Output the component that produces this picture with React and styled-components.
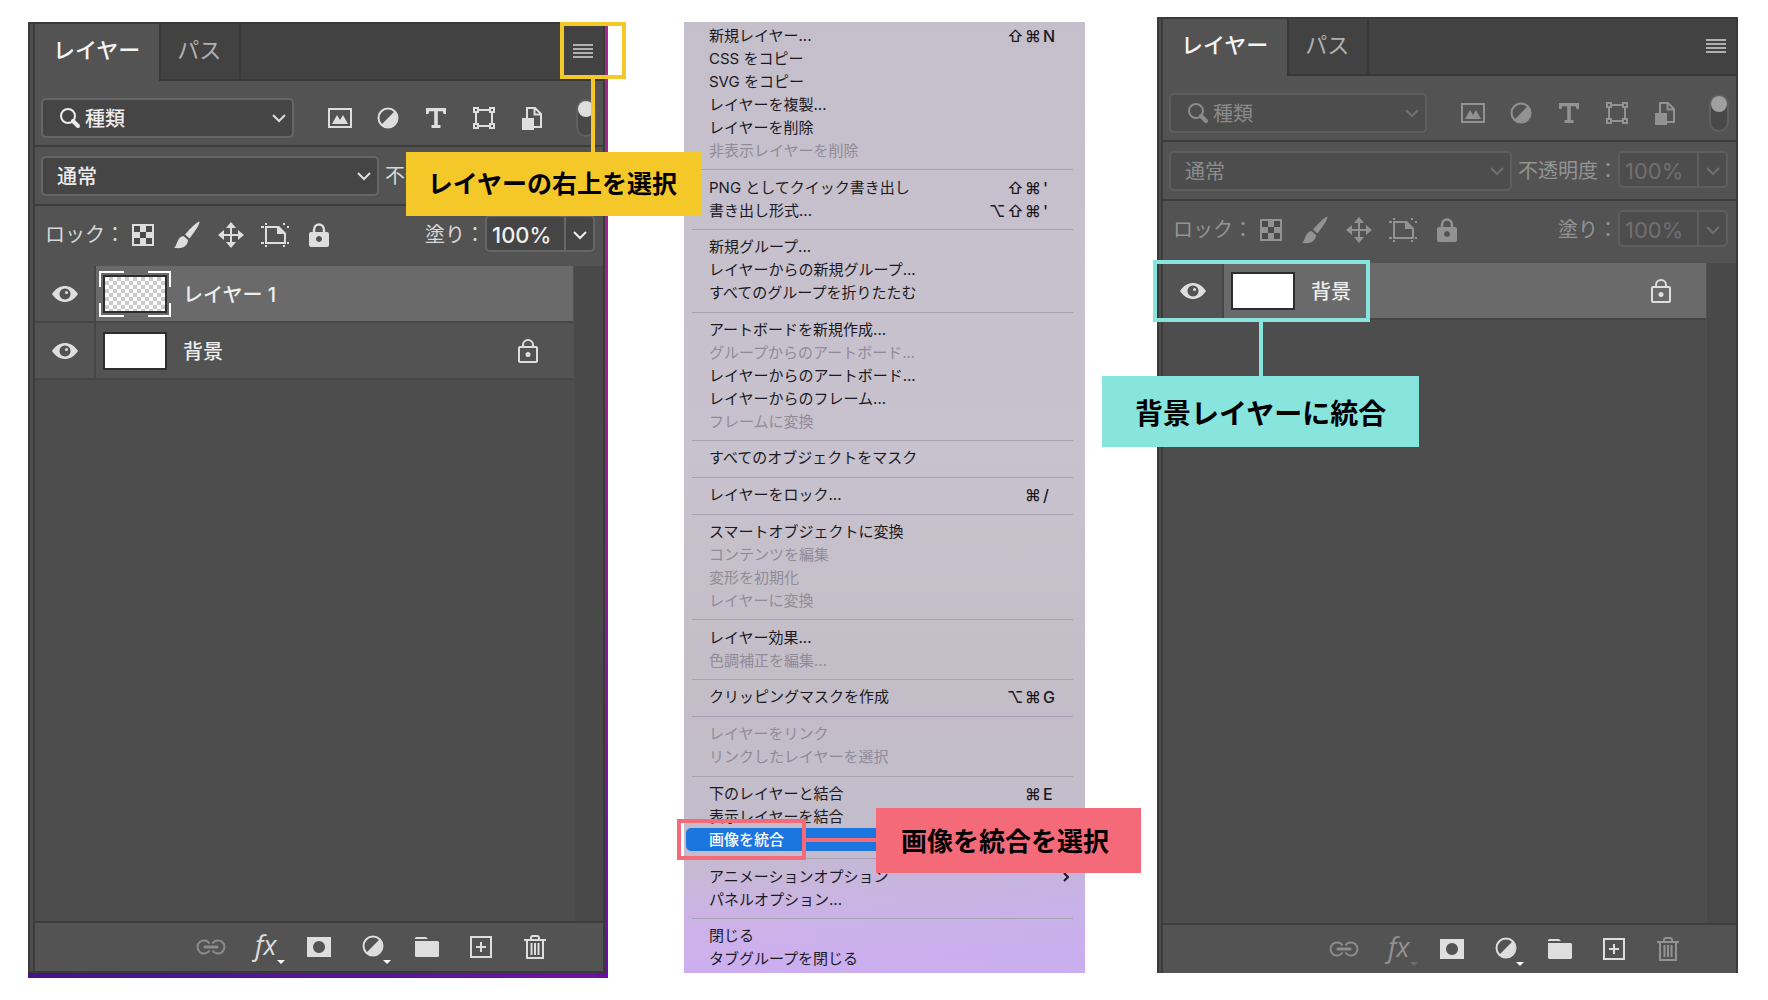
import React, { useState } from 'react'
import styled, { createGlobalStyle } from 'styled-components'

const GlobalStyle = createGlobalStyle`
    * {
        box-sizing: border-box;
    }
    body {
        margin: 0;
        background-color: white;
        font-family: Inter, "Noto Sans CJK JP", sans-serif;
    }
    button, input, select {
        font-family: inherit;
        margin: 0;
    }
`;

const Page = styled.main`
    display: flex;
    gap: 72px;
    min-height: 100vh;
    padding: 0 30px 0 28px;
`;

/* ---------- panel ---------- */

const PanelFrame = styled.section`
    position: relative;
    display: flex;
    flex: ${(props) => (props.$purple ? "577" : "581")} 1 0;
    min-width: 0;
    margin: ${(props) => (props.$purple ? "22px 4px 22px 0" : "17px 0 27px")};
    padding: ${(props) => (props.$purple ? "0 3px 5px 0" : "0")};
    background: ${(props) => props.$purple
        ? "linear-gradient(to right, #43158a, #6a14a0 98%, transparent 98%) bottom / 100% 6px no-repeat, linear-gradient(#a8268f, #9a1f90 40%, #6512a0)"
        : "#535353"};
`;
const Panel = styled.div`
    display: flex;
    flex-direction: column;
    flex: 1;
    min-width: 0;
    background-color: #4d4d4d;
    border: solid #3a3a3a;
    border-width: 2px 2px ${(props) => (props.$disabled ? "0" : "2px")} 2px;
`;
const Inner = styled.div`
    display: flex;
    flex-direction: column;
    flex: 1;
    border-left: 2px solid #3c3c3c;
    margin-left: ${(props) => (props.$disabled ? "2px" : "3px")};
`;
const TabBar = styled.div`
    display: flex;
    height: 57px;
    background-color: #424242;
`;
const Tab = styled.button`
    border: solid #383838;
    border-width: ${(props) => (props.$active ? "0 2px 0 0" : "0 2px 2px 0")};
    background-color: ${(props) => (props.$active ? "#535353" : "#424242")};
    color: ${(props) => (props.$active ? "#f4f4f4" : "#b0b0b0")};
    font-size: 22px;
    font-weight: ${(props) => (props.$active ? 500 : 400)};
    padding: ${(props) => (props.$active ? "0 19px 9px 18px" : "0 18px 7px 16px")};
    white-space: nowrap;
`;
const TabActions = styled.div`
    flex: 1;
    display: flex;
    justify-content: flex-end;
    align-items: center;
    padding-right: 10px;
    border-bottom: 2px solid #383838;
`;
const IconButton = styled.button`
    display: flex;
    align-items: center;
    justify-content: center;
    width: ${(props) => props.$width || 28}px;
    height: 28px;
    padding: 0;
    border: none;
    background: none;
    color: ${(props) => (props.$dim ? "#929292" : "#dedede")};

    svg {
        flex: none;
        overflow: visible;
    }
`;
const Row = styled.div`
    display: flex;
    align-items: flex-start;
    background-color: #535353;
    padding: ${(props) => props.$pad};
    border-bottom: ${(props) => (props.$last ? "0" : "2px")} solid #3d3d3d;
`;
const SelectBox = styled.div`
    flex: 1;
    min-width: 0;
    height: 40px;
    display: flex;
    align-items: center;
    gap: 4px;
    padding: 0 5px 0 ${(props) => (props.$search ? "16px" : "14px")};
    border: 2px solid ${(props) => (props.$disabled ? "#5e5e5e" : "#666666")};
    border-radius: 5px;
    background-color: ${(props) => (props.$disabled ? "#4d4d4d" : "#454545")};
    color: ${(props) => (props.$disabled ? "#8c8c8c" : "#ececec")};

    svg {
        flex: none;
    }
    svg:last-child {
        color: ${(props) => (props.$disabled ? "#707070" : "#dedede")};
    }
`;
const Select = styled.select`
    flex: 1;
    min-width: 0;
    height: 36px;
    padding: 1px 0 0;
    appearance: none;
    border: none;
    background: none;
    color: inherit;
    font-size: 20px;
    font-weight: ${(props) => (props.disabled ? 400 : 500)};
    opacity: 1;
`;
const FilterIcons = styled.div`
    display: flex;
    align-items: center;
    gap: 20px;
    height: 40px;
    margin: 0 30px 0 32px;
`;
const FilterSwitch = styled.input`
    appearance: none;
    width: 20px;
    height: 38px;
    margin: 0;
    margin-top: 1px;
    padding: 0;
    border: 2px solid #5f5f5f;
    border-radius: 10px;
    background-color: #484848;

    &::before {
        content: "";
        display: block;
        width: 16px;
        height: 16px;
        border-radius: 50%;
        background-color: ${(props) => (props.$dim ? "#a0a0a0" : "#dedede")};
    }
`;
const RowLabel = styled.label`
    height: 40px;
    line-height: 41px;
    font-size: 20px;
    white-space: nowrap;
    color: ${(props) => (props.$disabled ? "#939393" : "#d8d8d8")};
    margin-left: ${(props) => props.$gap || "0"};
`;
const LockIcons = styled.div`
    display: flex;
    align-items: center;
    gap: 16px;
    height: 40px;
    margin-left: 4px;
`;
const NumberBox = styled.div`
    display: flex;
    width: 110px;
    height: 37px;
    border: 2px solid ${(props) => (props.$disabled ? "#5e5e5e" : "#666666")};
    border-radius: 5px;
    background-color: ${(props) => (props.$disabled ? "#4d4d4d" : "#454545")};
    color: ${(props) => (props.$disabled ? "#707070" : "#f0f0f0")};
`;
const NumberInput = styled.input`
    width: 79px;
    padding: 2px 0 0 5px;
    border: none;
    border-right: 2px solid ${(props) => (props.disabled ? "#5e5e5e" : "#666666")};
    background: none;
    color: inherit;
    font-size: 22px;
    font-weight: ${(props) => (props.disabled ? 400 : 500)};
`;
const NumberArrow = styled.button`
    flex: 1;
    display: flex;
    align-items: center;
    justify-content: center;
    padding: 3px 0 0;
    border: none;
    background: none;
    color: inherit;
`;

/* ---------- layers ---------- */

const LayerArea = styled.div`
    flex: 1;
    display: flex;
`;
const LayerList = styled.ul`
    flex: 1;
    list-style: none;
    margin: 0;
    padding: 0;
`;
const ScrollTrack = styled.div`
    width: 30px;
    background-color: #494949;
    border-left: 1px solid #505050;
`;
const Layer = styled.li`
    display: flex;
    height: 57px;
    background-color: #535353;
    border-bottom: 2px solid #454545;
`;
const EyeButton = styled.button`
    display: flex;
    align-items: center;
    justify-content: center;
    width: 61px;
    padding: 0;
    border: none;
    border-right: 2px solid #454545;
    background: none;
    color: #dedede;
`;
const LayerBody = styled.div`
    flex: 1;
    display: flex;
    align-items: center;
    gap: 12px;
    padding: 0 35px 0 3px;
    color: #dedede;
    background-color: ${(props) => (props.$selected ? "#6a6a6a" : "transparent")};
`;
const LayerName = styled.span`
    flex: 1;
    font-size: 20px;
    font-weight: 500;
    color: #ededed;
`;
const Footer = styled.div`
    display: flex;
    align-items: center;
    justify-content: flex-end;
    gap: 26px;
    height: 50px;
    padding: 0 54px 1px 0;
    background-color: #535353;
    border-top: 2px solid #3d3d3d;
`;

/* ---------- menu ---------- */

const Menu = styled.ul`
    flex: 401 1 0;
    display: flex;
    flex-direction: column;
    list-style: none;
    margin: 22px 0 27px;
    padding: 3px 0 2px;
    background: linear-gradient(to right, transparent, #c3aef066) bottom / 100% 120px no-repeat,
        linear-gradient(#c5bfcb, #c8c2ce 45%, #c3bdc8 70%, #c4bccb 87%, #ccb3e6 94%, #ceaef0);
`;
const MenuItem = styled.li`
    position: relative;
    flex: 1 0 22px;
    display: flex;
    margin: 0 4px 0 2px;
`;
const MenuButton = styled.button`
    flex: 1;
    display: flex;
    align-items: center;
    justify-content: space-between;
    padding: 0 ${(props) => (props.$sub ? "12px" : "22px")} 0 23px;
    border: none;
    border-radius: 5px;
    background-color: ${(props) => (props.$active ? "#1b76e0" : "transparent")};
    color: ${(props) => (props.$active ? "white" : "#1b191e")};
    font-size: 15px;
    font-weight: ${(props) => (props.$active ? 500 : 400)};
    line-height: 22px;
    white-space: nowrap;

    &:disabled {
        color: #918b98;
    }
`;
const Separator = styled.li`
    flex: none;
    height: 14px;
    margin: 0 12px 0 8px;
    padding-top: 7px;

    &::after {
        content: "";
        display: block;
        height: 1px;
        background-color: #a8a1b2;
    }
`;
const Shortcut = styled.span`
    display: flex;
`;
const Key = styled.kbd`
    width: ${(props) => (props.$last ? 16 : 18)}px;
    text-align: left;
    font-family: Inter, "DejaVu Sans", sans-serif;
    font-size: 16px;
    font-weight: 500;
`;

/* ---------- callouts ---------- */

const Marker = styled.div`
    position: absolute;
    z-index: 2;
    pointer-events: none;
    border: 4px solid ${(props) => props.$color};
`;
const Connector = styled.div`
    position: absolute;
    z-index: 2;
    background-color: ${(props) => props.$color};
`;
const CalloutLabel = styled.p`
    position: absolute;
    z-index: 2;
    display: flex;
    align-items: center;
    justify-content: center;
    margin: 0;
    font-weight: 700;
    color: black;
    white-space: nowrap;
    background-color: ${(props) => props.$color};
`;

const YELLOW = "#f4c829";
const PINK = "#f56a79";
const TEAL = "#88e5de";

const YellowMarker = styled(Marker)`
    top: 0;
    right: -18px;
    width: 66px;
    height: 57px;
`;
const YellowConnector = styled(Connector)`
    top: 57px;
    right: 13px;
    width: 4px;
    height: 73px;
`;
const YellowLabel = styled(CalloutLabel)`
    top: 130px;
    right: -93px;
    height: 64px;
    padding: 0 24px 4px 22px;
    font-size: 25px;
`;
const PinkMarker = styled(Marker)`
    top: -9px;
    bottom: -9px;
    left: -9px;
    width: 129px;
`;
const PinkConnector = styled(Connector)`
    top: 10px;
    left: 120px;
    width: 70px;
    height: 4px;
`;
const PinkLabel = styled(CalloutLabel)`
    top: -20px;
    left: 190px;
    height: 65px;
    padding: 0 32px 3px 25px;
    font-size: 26px;
`;
const TealMarker = styled(Marker)`
    top: 243px;
    left: -4px;
    width: 217px;
    height: 62px;
`;
const TealConnector = styled(Connector)`
    top: 305px;
    left: 102px;
    width: 4px;
    height: 55px;
`;
const TealLabel = styled(CalloutLabel)`
    top: 359px;
    left: -55px;
    height: 71px;
    padding: 0 33px;
    font-size: 28px;
`;

/* ---------- icons ---------- */

const Chevron = () => (
    <svg width="16" height="16" viewBox="0 0 16 16" fill="none" stroke="currentColor" strokeWidth="2">
        <path d="M2 5 L8 11 L14 5" />
    </svg>
);
const Hamburger = () => (
    <svg width="20" height="15" viewBox="0 0 20 15" fill="#b0b0b0">
        <path d="M0 0h20v2H0z M0 4h20v2H0z M0 8h20v2H0z M0 12h20v2H0z" />
    </svg>
);
const SearchIcon = () => (
    <svg width="22" height="22" viewBox="0 0 22 22" fill="none" stroke="currentColor">
        <circle cx="9" cy="9" r="7" strokeWidth="2" />
        <path d="M14 14 L19 19" strokeWidth="4" strokeLinecap="round" />
    </svg>
);
const ImageIcon = () => (
    <svg width="24" height="20" viewBox="0 0 24 20" fill="currentColor">
        <path d="M0 0h24v20H0z M2 2v16h20V2z" fillRule="evenodd" />
        <path d="M4 16 L9 7 L12 12 L15 7 L20 16z" />
    </svg>
);
const AdjustIcon = () => (
    <svg width="22" height="22" viewBox="0 0 22 22">
        <circle cx="11" cy="11" r="9.5" fill="none" stroke="currentColor" strokeWidth="2" />
        <path d="M4.3 17.7 A9.5 9.5 0 0 0 17.7 4.3z" fill="currentColor" />
    </svg>
);
const TypeIcon = () => (
    <svg width="20" height="20" viewBox="0 0 20 20" fill="currentColor">
        <path d="M0 0h20v6h-2.5l-.7-2.8H11.8V17H14.5v3h-9v-3H8.2V3.2H3.2L2.5 6H0z" />
    </svg>
);
const ShapeIcon = () => (
    <svg width="22" height="22" viewBox="0 0 22 22" fill="none" stroke="currentColor" strokeWidth="2">
        <path d="M1 1h4v4H1z M17 1h4v4h-4z M1 17h4v4H1z M17 17h4v4h-4z M5 3h12 M5 19h12 M3 5v12 M19 5v12" />
    </svg>
);
const SmartIcon = () => (
    <svg width="20" height="24" viewBox="0 0 20 24">
        <path d="M5 12V2h8l6 6v13h-8 M12.5 2v6.5H19" fill="none" stroke="currentColor" strokeWidth="2" />
        <path d="M0 12h12v12H0z" fill="currentColor" />
    </svg>
);
const CheckerIcon = () => (
    <svg width="22" height="22" viewBox="0 0 22 22">
        <path d="M0 0h22v22H0z" fill="currentColor" />
        <path d="M2 2h6v6H2z M14 2h6v6h-6z M8 8h6v6H8z M2 14h6v6H2z M14 14h6v6h-6z" fill="#4a4a4a" />
    </svg>
);
const BrushIcon = () => (
    <svg width="26" height="28" viewBox="0 0 26 28" fill="currentColor">
        <path d="M25.5 .5 C26 2 23 8 15.5 17.5 L11 13.5 C17 6.5 23 1 25.5 .5z" />
        <path d="M9.5 15 L14 19 C14 25 8 28.5 0 26.8 C3.5 25 2.5 16 9.5 15z" />
    </svg>
);
const MoveIcon = () => (
    <svg width="26" height="26" viewBox="0 0 26 26" fill="currentColor">
        <path d="M12 5h2v16h-2z M5 12h16v2H5z" />
        <path d="M13 0l5 6H8z M13 26l5-6H8z M0 13l6-5v10z M26 13l-6-5v10z" />
    </svg>
);
const ArtboardIcon = () => (
    <svg width="28" height="24" viewBox="0 0 28 24" fill="currentColor">
        <path d="M4 3h14l7 7v11H4z M6 5v14h17v-8h-7V5z" fillRule="evenodd" />
        <path d="M4 0h2v2H4z M0 3h3v2H0z M22 0h2v2h-2z M26 3h2v2h-2z M0 19h3v2H0z M4 22h2v2H4z M22 22h2v2h-2z M26 19h2v2h-2z" />
    </svg>
);
const LockFilled = () => (
    <svg width="20" height="24" viewBox="0 0 20 24">
        <path d="M5 11V7a5 5.5 0 0 1 10 0v4" fill="none" stroke="currentColor" strokeWidth="2.5" />
        <path d="M2 9h16a2 2 0 0 1 2 2v11a2 2 0 0 1-2 2H2a2 2 0 0 1-2-2V11a2 2 0 0 1 2-2z M10 13a3 3 0 1 0 .01 0z" fill="currentColor" fillRule="evenodd" />
    </svg>
);
const LockOutline = () => (
    <svg width="20" height="24" viewBox="0 0 20 24" fill="none" stroke="currentColor" strokeWidth="2">
        <path d="M5 8V6a5 5 0 0 1 10 0v2" />
        <rect x="1" y="8" width="18" height="15" rx="1" />
        <circle cx="10" cy="15.5" r="2.5" fill="currentColor" stroke="none" />
    </svg>
);
const EyeIcon = () => (
    <svg width="26" height="16" viewBox="0 0 26 16">
        <path d="M0 8 C7 -2.7 19 -2.7 26 8 C19 18.7 7 18.7 0 8z M13 2.5a5.5 5.5 0 1 0 .01 0z" fill="currentColor" fillRule="evenodd" />
        <circle cx="14.5" cy="6.5" r="1.5" fill="currentColor" />
    </svg>
);
const LinkIcon = () => (
    <svg width="28" height="16" viewBox="0 0 28 16" fill="none" stroke="#8c8c8c" strokeWidth="2">
        <path d="M12.5 4.5 A6.5 6.5 0 1 0 12.5 11.5" />
        <path d="M15.5 4.5 A6.5 6.5 0 1 1 15.5 11.5" />
        <path d="M8 8h12" strokeWidth="3" strokeLinecap="round" />
    </svg>
);
const FxIcon = ({ arrow }) => (
    <svg width="28" height="28" viewBox="0 0 28 28" fill="currentColor">
        <text x="4" y="22" fontFamily="'Open Sans', 'Noto Sans', sans-serif" fontStyle="italic" fontSize="27">fx</text>
        <path d="M26 27h8l-4 4z" fill={arrow} />
    </svg>
);
const MaskIcon = () => (
    <svg width="26" height="20" viewBox="0 0 26 20" fill="currentColor">
        <path d="M1 0h24v20H1z M13 4a6 6 0 1 0 .01 0z" fillRule="evenodd" />
    </svg>
);
const AdjustMenuIcon = () => (
    <svg width="22" height="22" viewBox="0 0 22 22">
        <circle cx="11" cy="10" r="9.5" fill="none" stroke="currentColor" strokeWidth="2" />
        <path d="M4.3 16.7 A9.5 9.5 0 0 0 17.7 3.3z" fill="currentColor" />
        <path d="M21 24h8l-4 4z" fill="white" />
    </svg>
);
const FolderIcon = () => (
    <svg width="24" height="20" viewBox="0 0 24 20" fill="currentColor">
        <path d="M1 0h10l2 2H0V1z M0 4h23l1 1v14l-1 1H1l-1-1z" />
    </svg>
);
const NewIcon = () => (
    <svg width="22" height="22" viewBox="0 0 22 22" fill="none" stroke="currentColor" strokeWidth="2">
        <path d="M1 1h20v20H1z M11 6v10 M6 11h10" />
    </svg>
);
const TrashIcon = () => (
    <svg width="22" height="24" viewBox="0 0 22 24" fill="none" stroke="currentColor" strokeWidth="2">
        <path d="M0 5h22 M7 4V3a2 2 0 0 1 2-2h4a2 2 0 0 1 2 2v1 M3 5v18h16V5 M7.5 8v12 M11 8v12 M14.5 8v12" />
    </svg>
);
const SubmenuArrow = () => (
    <svg width="6" height="10" viewBox="0 0 6 10" fill="none" stroke="currentColor" strokeWidth="2">
        <path d="M1 1l4 4-4 4" />
    </svg>
);

const Thumbnail = ({ transparent }) => (
    <svg width="72" height="46" viewBox="0 0 72 46">
        <defs>
            <pattern id="checker" x="6" y="6" width="8" height="8" patternUnits="userSpaceOnUse">
                <path d="M0 0h8v8H0z" fill="white" />
                <path d="M4 0h4v4H4z M0 4h4v4H0z" fill="#cbcbcb" />
            </pattern>
        </defs>
        <rect x="5" y="5" width="62" height="36" fill={transparent ? "url(#checker)" : "white"} stroke="#2d2d2d" strokeWidth="2" />
        {transparent && (
            <path
                d="M1 16V1h24 M49 1h22v15 M1 32v13h24 M49 45h22V32"
                fill="none"
                stroke="white"
                strokeWidth="2"
            />
        )}
    </svg>
);

/* ---------- data ---------- */

const filters = [
    ["ピクセルレイヤー", ImageIcon],
    ["調整レイヤー", AdjustIcon],
    ["テキストレイヤー", TypeIcon],
    ["シェイプレイヤー", ShapeIcon],
    ["スマートオブジェクト", SmartIcon],
];
const locks = [
    ["透明ピクセル", CheckerIcon],
    ["画像ピクセル", BrushIcon],
    ["位置", MoveIcon],
    ["アートボード", ArtboardIcon],
    ["すべて", LockFilled],
];

const menuGroups = [
    [
        { text: "新規レイヤー...", keys: "⇧⌘N" },
        { text: "CSS をコピー" },
        { text: "SVG をコピー" },
        { text: "レイヤーを複製..." },
        { text: "レイヤーを削除" },
        { text: "非表示レイヤーを削除", disabled: true },
    ],
    [
        { text: "PNG としてクイック書き出し", keys: "⇧⌘'" },
        { text: "書き出し形式...", keys: "⌥⇧⌘'" },
    ],
    [
        { text: "新規グループ..." },
        { text: "レイヤーからの新規グループ..." },
        { text: "すべてのグループを折りたたむ" },
    ],
    [
        { text: "アートボードを新規作成..." },
        { text: "グループからのアートボード...", disabled: true },
        { text: "レイヤーからのアートボード..." },
        { text: "レイヤーからのフレーム..." },
        { text: "フレームに変換", disabled: true },
    ],
    [{ text: "すべてのオブジェクトをマスク" }],
    [{ text: "レイヤーをロック...", keys: "⌘/" }],
    [
        { text: "スマートオブジェクトに変換" },
        { text: "コンテンツを編集", disabled: true },
        { text: "変形を初期化", disabled: true },
        { text: "レイヤーに変換", disabled: true },
    ],
    [
        { text: "レイヤー効果..." },
        { text: "色調補正を編集...", disabled: true },
    ],
    [{ text: "クリッピングマスクを作成", keys: "⌥⌘G" }],
    [
        { text: "レイヤーをリンク", disabled: true },
        { text: "リンクしたレイヤーを選択", disabled: true },
    ],
    [
        { text: "下のレイヤーと結合", keys: "⌘E" },
        { text: "表示レイヤーを結合" },
        { text: "画像を統合", active: true },
    ],
    [
        { text: "アニメーションオプション", sub: true },
        { text: "パネルオプション..." },
    ],
    [
        { text: "閉じる" },
        { text: "タブグループを閉じる" },
    ],
];

/* ---------- components ---------- */

function PercentField({ id, disabled }) {
    const [value, setValue] = useState("100%");
    return (
        <NumberBox $disabled={disabled}>
            <NumberInput id={id} disabled={disabled} value={value} onChange={(e) => setValue(e.target.value)} />
            <NumberArrow disabled={disabled} aria-label="スライダーを開く">
                <Chevron />
            </NumberArrow>
        </NumberBox>
    )
}

function LayersPanel({ id, layers, disabled }) {
    return (
        <Panel $disabled={disabled}>
            <Inner $disabled={disabled}>
                <TabBar>
                    <Tab $active>レイヤー</Tab>
                    <Tab>パス</Tab>
                    <TabActions>
                        <IconButton $width={20} aria-label="パネルメニュー">
                            <Hamburger />
                        </IconButton>
                    </TabActions>
                </TabBar>
                <Row $pad="17px 7px 7px 6px">
                    <SelectBox $search $disabled={disabled}>
                        <SearchIcon />
                        <Select aria-label="フィルターの種類" disabled={disabled}>
                            <option>種類</option>
                        </Select>
                        <Chevron />
                    </SelectBox>
                    <FilterIcons>
                        {filters.map(([name, Icon]) => (
                            <IconButton key={name} aria-label={name} $dim={disabled}>
                                <Icon />
                            </IconButton>
                        ))}
                    </FilterIcons>
                    <FilterSwitch type="checkbox" aria-label="フィルターのオン/オフ" $dim={disabled} />
                </Row>
                <Row $pad="9px 8px 8px 6px">
                    <SelectBox $disabled={disabled}>
                        <Select aria-label="描画モード" disabled={disabled}>
                            <option>通常</option>
                        </Select>
                        <Chevron />
                    </SelectBox>
                    <RowLabel htmlFor={id + "-opacity"} $gap="6px" $disabled={disabled}>不透明度：</RowLabel>
                    <PercentField id={id + "-opacity"} disabled={disabled} />
                </Row>
                <Row $pad={disabled ? "9px 8px 13px 10px" : "9px 8px 11px 10px"} $last>
                    <RowLabel as="span" $disabled={disabled}>ロック：</RowLabel>
                    <LockIcons>
                        {locks.map(([name, Icon]) => (
                            <IconButton key={name} aria-label={name} $dim={disabled}>
                                <Icon />
                            </IconButton>
                        ))}
                    </LockIcons>
                    <RowLabel htmlFor={id + "-fill"} $gap="auto" $disabled={disabled}>塗り：</RowLabel>
                    <PercentField id={id + "-fill"} disabled={disabled} />
                </Row>
                <LayerArea>
                    <LayerList>
                        {layers.map((layer) => (
                            <Layer key={layer.name}>
                                <EyeButton aria-label="表示">
                                    <EyeIcon />
                                </EyeButton>
                                <LayerBody $selected={layer.selected}>
                                    <Thumbnail transparent={layer.transparent} />
                                    <LayerName>{layer.name}</LayerName>
                                    {layer.locked && <LockOutline />}
                                </LayerBody>
                            </Layer>
                        ))}
                    </LayerList>
                    <ScrollTrack />
                </LayerArea>
                <Footer>
                    <IconButton aria-label="リンク"><LinkIcon /></IconButton>
                    <IconButton aria-label="レイヤースタイル" $dim={disabled}>
                        <FxIcon arrow={disabled ? "#6c6c6c" : "white"} />
                    </IconButton>
                    <IconButton aria-label="マスクを追加"><MaskIcon /></IconButton>
                    <IconButton aria-label="調整レイヤーを作成"><AdjustMenuIcon /></IconButton>
                    <IconButton aria-label="グループを作成"><FolderIcon /></IconButton>
                    <IconButton aria-label="レイヤーを作成"><NewIcon /></IconButton>
                    <IconButton aria-label="削除" $dim={disabled}><TrashIcon /></IconButton>
                </Footer>
            </Inner>
        </Panel>
    )
}

function PanelMenu() {
    return (
        <Menu>
            {menuGroups.map((group, i) => (
                <React.Fragment key={i}>
                    {i > 0 && <Separator role="separator" />}
                    {group.map((item) => (
                        <MenuItem key={item.text}>
                            <MenuButton disabled={item.disabled} $active={item.active} $sub={item.sub}>
                                <span>{item.text}</span>
                                {item.keys && (
                                    <Shortcut>
                                        {[...item.keys].map((key, k) => (
                                            <Key key={k} $last={k === item.keys.length - 1}>{key}</Key>
                                        ))}
                                    </Shortcut>
                                )}
                                {item.sub && <SubmenuArrow />}
                            </MenuButton>
                            {item.active && (
                                <>
                                    <PinkMarker $color={PINK} />
                                    <PinkConnector $color={PINK} />
                                    <PinkLabel $color={PINK}>画像を統合を選択</PinkLabel>
                                </>
                            )}
                        </MenuItem>
                    ))}
                </React.Fragment>
            ))}
        </Menu>
    )
}

export default function App() {
    return (
        <>
            <GlobalStyle />
            <Page>
                <PanelFrame $purple>
                    <LayersPanel
                        id="before"
                        layers={[
                            { name: "レイヤー 1", transparent: true, selected: true },
                            { name: "背景", locked: true },
                        ]}
                    />
                    <YellowMarker $color={YELLOW} />
                    <YellowConnector $color={YELLOW} />
                    <YellowLabel $color={YELLOW}>レイヤーの右上を選択</YellowLabel>
                </PanelFrame>
                <PanelMenu />
                <PanelFrame>
                    <LayersPanel id="after" disabled layers={[{ name: "背景", locked: true, selected: true }]} />
                    <TealMarker $color={TEAL} />
                    <TealConnector $color={TEAL} />
                    <TealLabel $color={TEAL}>背景レイヤーに統合</TealLabel>
                </PanelFrame>
            </Page>
        </>
    )
}
